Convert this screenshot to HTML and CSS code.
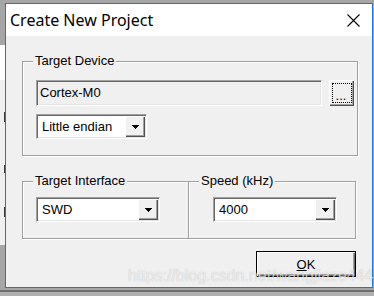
FILE: index.html
```html
<!DOCTYPE html>
<html>
<head>
<meta charset="utf-8">
<link rel="stylesheet" href="styles.css">
</head>
<body>
<div class="screen">
  <div class="main">
    <div class="behind">
      <div class="seg s1"></div>
      <div class="seg s2"></div>
      <div class="seg s3"><i class="tick t1"></i><i class="tick t2"></i><i class="tick t3"></i></div>
      <div class="seg s4"></div>
    </div>
    <div class="dialog">
      <div class="titlebar">
        <span class="title">Create New Project</span>
        <svg class="close" width="13" height="13" viewBox="0 0 13 13"><path d="M0.5 0.5 L12.5 12.5 M12.5 0.5 L0.5 12.5" stroke="#000" stroke-width="1.1" fill="none"/></svg>
      </div>
      <div class="body">
        <div class="group g1">
          <span class="legend">Target Device</span>
          <div class="row">
            <div class="edit">Cortex-M0</div>
            <div class="btn ellipsis"><span class="focus">...</span></div>
          </div>
          <div class="combo c-endian">
            <span class="val">Little endian</span>
            <span class="drop"><svg width="7" height="4" viewBox="0 0 7 4"><polygon points="0,0 7,0 3.5,4" fill="#000"/></svg></span>
          </div>
        </div>
        <div class="pair">
          <div class="group g2">
            <span class="legend">Target Interface</span>
            <div class="combo c-wide">
              <span class="val">SWD</span>
              <span class="drop"><svg width="7" height="4" viewBox="0 0 7 4"><polygon points="0,0 7,0 3.5,4" fill="#000"/></svg></span>
            </div>
          </div>
          <div class="group g3">
            <span class="legend">Speed (kHz)</span>
            <div class="combo c-wide">
              <span class="val">4000</span>
              <span class="drop"><svg width="7" height="4" viewBox="0 0 7 4"><polygon points="0,0 7,0 3.5,4" fill="#000"/></svg></span>
            </div>
          </div>
        </div>
        <div class="actions">
          <div class="okbtn"><span class="oklabel"><u>O</u>K</span></div>
        </div>
      </div>
    </div>
  </div>
  <div class="floor"></div>
  <div class="watermark">https://blog.csdn.net/wangjiaze444</div>
</div>
</body>
</html>
```

FILE: styles.css
```css
* { box-sizing: border-box; }
html, body { margin: 0; padding: 0; }
body { background: #a6a6a6; }

.screen {
  position: relative;
  width: 374px;
  height: 296px;
  overflow: hidden;
  background: #a6a6a6;
  font-family: "Liberation Sans", Arial, sans-serif;
  font-size: 13px;
  color: #000;
}

.main { display: flex; height: 288px; }

.behind { width: 5px; display: flex; flex-direction: column; }
.s1 { height: 45px; background: #a6a6a6; }
.s2 { height: 35px; background: #ffffff; }
.s3 { height: 165px; background: #f0f0f0; display: flex; flex-direction: column; align-items: flex-end; }
.s4 { flex: 1; background: #a6a6a6; }
.tick { display: block; width: 1px; background: #3a3a3a; }
.t1 { margin-top: 32px; height: 10px; }
.t2 { margin-top: 43px; height: 8px; }
.t3 { margin-top: 34px; height: 10px; }

.dialog {
  margin-top: 3px;
  width: 368px;
  height: 285px;
  border: 1px solid #1a79d2;
  background: #f0f0f0;
  display: flex;
  flex-direction: column;
}

.titlebar {
  height: 32px;
  background: #ffffff;
  display: flex;
  align-items: center;
  justify-content: space-between;
  padding: 0 12px 0 4px;
}
.title {
  font-family: "Noto Sans", "Open Sans", sans-serif;
  font-size: 16px;
  color: #000;
}
.close { display: block; }

.body { flex: 1; padding: 25px 0 0 16px; }

.group {
  position: relative;
  border: 1px solid #a0a0a0;
  box-shadow: inset 1px 1px #ffffff, 1px 1px #ffffff;
}
.legend {
  position: absolute;
  top: -9px;
  left: 10px;
  padding: 0 2px 0 2px;
  background: #f0f0f0;
  line-height: 16px;
}

.g1 { width: 336px; height: 95px; padding: 18px 0 0 13px; }
.row { display: flex; gap: 7px; }

.edit {
  width: 286px;
  height: 26px;
  background: #f0f0f0;
  border: 1px solid;
  border-color: #a0a0a0 #ffffff #ffffff #a0a0a0;
  box-shadow: inset 1px 1px #696969, inset -1px -1px #e3e3e3;
  padding-left: 3px;
  line-height: 24px;
}

.btn {
  background: #f0f0f0;
  box-shadow: inset 1px 1px #ffffff, inset -1px -1px #505050, inset -2px -2px #a0a0a0;
}
.ellipsis {
  width: 25px;
  height: 26px;
  padding: 3px 2px 3px 3px;
  display: flex;
}
.focus {
  flex: 1;
  border: 1px dotted #000;
  display: flex;
  align-items: flex-end;
  justify-content: center;
  line-height: 12px;
  padding-right: 2px;
}

.combo {
  display: flex;
  background: #ffffff;
  border: 1px solid;
  border-color: #a0a0a0 #ffffff #ffffff #a0a0a0;
  box-shadow: inset 1px 1px #696969, inset -1px -1px #e3e3e3;
  padding: 1px;
  height: 25px;
}
.c-endian { margin-top: 8px; width: 111px; }
.c-wide { width: 124px; }
.val { flex: 1; padding-left: 4px; line-height: 21px; }
.drop {
  width: 20px;
  height: 21px;
  background: #f0f0f0;
  box-shadow: inset 1px 1px #ffffff, inset -1px -1px #505050, inset -2px -2px #a0a0a0;
  display: flex;
  align-items: center;
  justify-content: center;
}
.drop svg { display: block; shape-rendering: crispEdges; }

.pair { display: flex; margin-top: 25px; }
.g2 { width: 167px; height: 58px; padding: 15px 0 0 13px; }
.g3 { width: 168px; height: 58px; margin-left: -1px; padding: 15px 0 0 24px; }

.actions { display: flex; margin-top: 12px; padding-left: 234px; }
.okbtn {
  width: 100px;
  height: 26px;
  border: 1px solid #000;
  background: #f0f0f0;
  box-shadow: inset 1px 1px #ffffff, inset -1px -1px #696969, inset -2px -2px #a0a0a0;
  display: flex;
  align-items: center;
  justify-content: center;
}
.oklabel { line-height: 13px; }

.floor {
  height: 8px;
  background: linear-gradient(#a6a6a6 0 2px, #6e6e6e 2px 4px, #b0b0b0 4px);
}

.watermark {
  position: absolute;
  left: 128px;
  top: 269px;
  font-size: 16px;
  line-height: 14px;
  color: rgba(255, 255, 255, 0.7);
  text-shadow: 0 0 1px rgba(0, 0, 0, 0.25);
  white-space: nowrap;
}
```
